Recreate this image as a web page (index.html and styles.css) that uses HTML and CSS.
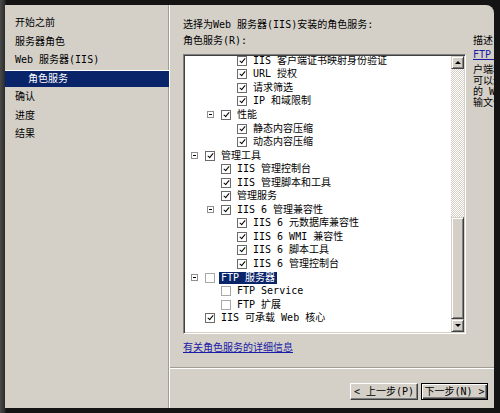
FILE: index.html
```html
<!DOCTYPE html>
<html lang="zh-cn">
<head>
<meta charset="utf-8">
<title>添加角色服务</title>
<link rel="stylesheet" href="styles.css">
</head>
<body>

<div class="wizard">
    <ul class="steps">
        <li>开始之前</li>
        <li>服务器角色</li>
        <li>Web 服务器(IIS)</li>
        <li class="current">角色服务</li>
        <li>确认</li>
        <li>进度</li>
        <li>结果</li>
    </ul>

    <div class="main">
        <div class="content">
            <div class="title">选择为Web 服务器(IIS)安装的角色服务:</div>
            <div class="cols">
                <div class="left">
                    <div class="tree-label">角色服务(R):</div>
                    <div class="tree">
                        <div class="items">
                            <ul>
                                <li class="l3"><span class="tog"></span><span class="cb on"></span><span class="name">IIS 客户端证书映射身份验证</span></li>
                                <li class="l3"><span class="tog"></span><span class="cb on"></span><span class="name">URL 授权</span></li>
                                <li class="l3"><span class="tog"></span><span class="cb on"></span><span class="name">请求筛选</span></li>
                                <li class="l3"><span class="tog"></span><span class="cb on"></span><span class="name">IP 和域限制</span></li>
                                <li class="l2"><span class="tog open"></span><span class="cb on"></span><span class="name">性能</span></li>
                                <li class="l3"><span class="tog"></span><span class="cb on"></span><span class="name">静态内容压缩</span></li>
                                <li class="l3"><span class="tog"></span><span class="cb on"></span><span class="name">动态内容压缩</span></li>
                                <li class="l1"><span class="tog open"></span><span class="cb on"></span><span class="name">管理工具</span></li>
                                <li class="l2"><span class="tog"></span><span class="cb on"></span><span class="name">IIS 管理控制台</span></li>
                                <li class="l2"><span class="tog"></span><span class="cb on"></span><span class="name">IIS 管理脚本和工具</span></li>
                                <li class="l2"><span class="tog"></span><span class="cb on"></span><span class="name">管理服务</span></li>
                                <li class="l2"><span class="tog open"></span><span class="cb on"></span><span class="name">IIS 6 管理兼容性</span></li>
                                <li class="l3"><span class="tog"></span><span class="cb on"></span><span class="name">IIS 6 元数据库兼容性</span></li>
                                <li class="l3"><span class="tog"></span><span class="cb on"></span><span class="name">IIS 6 WMI 兼容性</span></li>
                                <li class="l3"><span class="tog"></span><span class="cb on"></span><span class="name">IIS 6 脚本工具</span></li>
                                <li class="l3"><span class="tog"></span><span class="cb on"></span><span class="name">IIS 6 管理控制台</span></li>
                                <li class="l1"><span class="tog open"></span><span class="cb off"></span><span class="name sel">FTP 服务器</span></li>
                                <li class="l2"><span class="tog"></span><span class="cb off"></span><span class="name">FTP Service</span></li>
                                <li class="l2"><span class="tog"></span><span class="cb off"></span><span class="name">FTP 扩展</span></li>
                                <li class="l1"><span class="tog"></span><span class="cb on"></span><span class="name">IIS 可承载 Web 核心</span></li>
                            </ul>
                        </div>
                        <div class="scroll">
                            <div class="arrow up"></div>
                            <div class="track"></div>
                            <div class="thumb"></div>
                            <div class="arrow down"></div>
                        </div>
                    </div>
                    <a class="more" href="#">有关角色服务的详细信息</a>
                </div>
                <div class="desc">
                    <div class="desc-title">描述:</div>
                    <a href="#">FTP 服务器</a>
                    <p>户端和服务器之间<br>可以通过 FTP 协议<br>的 Web 服务器传<br>输文件。</p>
                </div>
            </div>
        </div>

        <div class="buttons">
            <button class="btn">&lt; 上一步(P)</button>
            <button class="btn default">下一步(N) &gt;</button>
        </div>
    </div>
</div>

</body>
</html>
```

FILE: styles.css
```css
html, body {
    margin: 0;
}
body {
    width: 500px;
    height: 413px;
    overflow: hidden;
    background: linear-gradient(to right, #4a4a4a 0, #2b2b2b 5px, #141414 6px);
    font-family: "DejaVu Sans Mono", "Noto Sans CJK SC", monospace;
    font-size: 10px;
    line-height: 13px;
    color: #000;
}
.wizard {
    margin: 5px 0 0 5px;
    width: 489px;
    height: 403px;
    background-color: #d4d0c8;
    border-top-right-radius: 8px;
    display: grid;
    grid-template-columns: 165px minmax(0, 1fr);
    overflow: hidden;
}

/* left step list */
.steps {
    list-style: none;
    margin: 0;
    padding: 10px 0 0;
    border-right: 1px solid #fff;
    box-shadow: inset -1px 0 #a19d95;
    display: flex;
    flex-direction: column;
    gap: 2.55px;
}
.steps li {
    height: 16px;
    line-height: 16px;
    padding-left: 10px;
    white-space: nowrap;
}
.steps li.current {
    background-color: #0a246a;
    color: #fff;
    padding-left: 23px;
    box-shadow: 0 -1px #fff;
}

/* main page */
.main {
    display: flex;
    flex-direction: column;
    min-width: 0;
}
.content {
    height: 363px;
    box-sizing: border-box;
    padding: 13px 0 0 13px;
    border-bottom: 1px solid #a19d95;
}
.title {
    height: 13px;
    white-space: nowrap;
}
.cols {
    display: grid;
    grid-template-columns: 283px minmax(0, 1fr);
    column-gap: 7px;
    margin-top: 3px;
}
.tree-label {
    height: 13px;
}
.tree {
    margin-top: 7px;
    height: 280px;
    box-sizing: border-box;
    padding: 1px;
    border: 1px solid;
    border-color: #808080 #fff #fff #808080;
    box-shadow: inset 1px 1px #404040, inset -1px -1px #d4d0c8;
    background-color: #fff;
    display: flex;
}
.items {
    flex: 1;
    overflow: hidden;
}
.items ul {
    list-style: none;
    margin: -2px 0 0;
    padding: 0;
}
.items li {
    display: flex;
    align-items: center;
    height: 13.55px;
    white-space: nowrap;
}
.l1 {
    padding-left: 6px;
}
.l2 {
    padding-left: 22px;
}
.l3 {
    padding-left: 38px;
}
.tog {
    width: 14px;
    flex: none;
}
.tog.open::before {
    content: "";
    display: block;
    width: 7px;
    height: 7px;
    box-sizing: border-box;
    border: 1px solid #8f8f8f;
    background: linear-gradient(#000, #000) center / 3px 1px no-repeat #fff;
}
.cb {
    position: relative;
    flex: none;
    width: 10px;
    height: 10px;
    box-sizing: border-box;
    border: 1px solid #6b6b6b;
    background-color: #fff;
}
.cb.off {
    border-color: #a8a8a8;
}
.cb.on::after {
    content: "";
    position: absolute;
    left: 2.5px;
    top: 0;
    width: 2px;
    height: 5px;
    border: solid #000;
    border-width: 0 1.5px 1.5px 0;
    transform: rotate(40deg);
}
.name {
    margin-left: 6px;
    line-height: 12px;
}
.name.sel {
    margin-left: 4px;
    padding: 0 2px;
    background-color: #0a246a;
    color: #fff;
}

/* scrollbar */
.scroll {
    width: 13px;
    flex: none;
    display: flex;
    flex-direction: column;
}
.arrow, .thumb {
    box-sizing: border-box;
    background-color: #d4d0c8;
    border: 1px solid;
    border-color: #d4d0c8 #404040 #404040 #d4d0c8;
    box-shadow: inset 1px 1px #fff, inset -1px -1px #808080;
}
.arrow {
    height: 13px;
    display: flex;
    align-items: center;
    justify-content: center;
}
.arrow::after {
    content: "";
    border-left: 3px solid transparent;
    border-right: 3px solid transparent;
}
.up::after {
    border-bottom: 3px solid #000;
}
.down::after {
    border-top: 3px solid #000;
}
.track {
    height: 148px;
    background: repeating-conic-gradient(#d4d0c8 0 25%, #fff 0 50%) 0 0 / 2px 2px;
}
.thumb {
    height: 102px;
}

.more {
    display: block;
    margin-top: 7px;
    color: #1a1aa6;
    white-space: nowrap;
}

/* description column */
.desc {
    overflow: hidden;
    white-space: nowrap;
}
.desc-title {
    height: 13px;
}
.desc a {
    display: block;
    margin-top: 1px;
    color: #1a1aa6;
}
.desc p {
    margin: 3px 0 0;
    line-height: 11px;
}

/* bottom buttons */
.buttons {
    display: flex;
    justify-content: flex-end;
    gap: 3px;
    padding: 14px 6px 0 0;
    border-top: 1px solid #fff;
}
.btn {
    width: 68px;
    height: 17px;
    padding: 0;
    font: inherit;
    line-height: 13px;
    color: #000;
    background-color: #d4d0c8;
    border: 1px solid;
    border-color: #fff #404040 #404040 #fff;
    box-shadow: inset -1px -1px #808080;
}
.btn.default {
    width: 67px;
    border-color: #000;
    box-shadow: inset 1px 1px #fff, inset -1px -1px #404040, inset -2px -2px #808080;
}
```
